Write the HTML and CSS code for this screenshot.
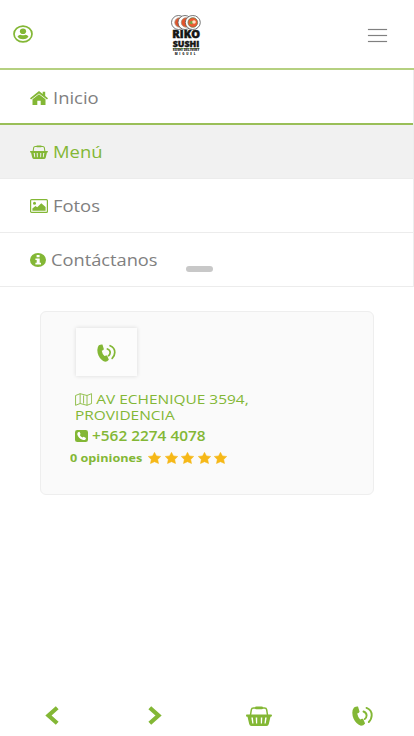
FILE: index.html
```html
<!DOCTYPE html>
<html lang="es">
<head>
<meta charset="utf-8">
<meta name="viewport" content="width=device-width, initial-scale=1">
<title>Riko Sushi</title>
<link rel="stylesheet" href="styles.css">
</head>
<body>
<svg class="defs" width="0" height="0">
  <symbol id="basket" viewBox="0 0 26 20">
    <path d="M4.500 9 5.300 3.800Q5.600 2 7.500 2H18.500Q20.400 2 20.700 3.800L21.500 9" fill="none" stroke="currentColor" stroke-width="1.500"/>
    <rect x="9" y=".6" width="8" height="2.600" rx="1.300" fill="currentColor"/>
    <path fill-rule="evenodd" fill="currentColor" d="M1 8.500H25Q26 8.500 26 9.500T25 10.700H24.500L22.800 18Q22.400 20 20.500 20H5.500Q3.600 20 3.200 18L1.500 10.700H1Q0 10.700 0 9.500T1 8.500ZM5.300 11.500 6.300 17.500H7.500L6.900 11.500ZM9.700 11.500 10 17.500H11.200V11.500ZM14.800 11.500V17.500H16L16.300 11.500ZM19.100 11.500 18.500 17.500H19.700L20.700 11.500Z"/>
  </symbol>
  <symbol id="phone" viewBox="0 0 21 20">
    <path fill="currentColor" d="M2 1.500Q4 .2 6 .5L7.600 5.800Q6.800 7.200 5.200 7.500Q5.800 11 8.200 13.400Q9.800 12.300 11.200 12.900L13.100 17.500Q11.500 19.700 9 19.700Q4.300 18.500 1.600 12.800Q-1.200 5.500 2 1.500Z"/>
    <path fill="none" stroke="currentColor" stroke-width="1.900" stroke-linecap="round" d="M11.500 5.500Q14.600 6.600 14.600 9.500Q14.500 12 12.800 13M14.500 1.900Q19.800 4 19.700 9.300Q19.600 13.400 16.800 16"/>
  </symbol>
  <symbol id="star" viewBox="0 0 24 24">
    <path fill="currentColor" stroke="currentColor" stroke-linejoin="round" d="M12 .7 15.600 7.800 23.500 8.900 17.900 14.900 19.400 23 12 19.400 4.600 23 6.100 14.900 .5 8.900 8.400 7.800Z"/>
  </symbol>
</svg>

<header class="topbar">
  <svg class="user" viewBox="0 0 20 18" preserveAspectRatio="none">
    <ellipse cx="10" cy="9" rx="9" ry="7.900" fill="none" stroke="currentColor" stroke-width="1.700"/>
    <ellipse cx="10" cy="6.300" rx="3.100" ry="2.800" fill="currentColor"/>
    <path fill="currentColor" d="M4.500 11.700Q5.500 9.800 7.600 9.700Q10 11 12.400 9.700Q14.500 9.800 15.500 11.700Q13.500 14.300 10 14.300T4.500 11.700Z"/>
  </svg>
  <div class="logo">
    <svg class="rolls" viewBox="0 0 30 15">
      <g stroke="#555" stroke-width=".8">
        <ellipse cx="7.500" cy="7.500" rx="7" ry="7" fill="#fff"/><circle cx="8.500" cy="7.500" r="4.700" fill="#e3532b" stroke="#a79078"/>
        <ellipse cx="14" cy="7.500" rx="7" ry="7" fill="#fff"/><circle cx="15" cy="7.500" r="4.700" fill="#e3532b" stroke="#a79078"/>
        <ellipse cx="21.800" cy="7.500" rx="7.500" ry="7" fill="#fff"/><circle cx="21.800" cy="7.500" r="4.800" fill="#ee5a30" stroke="#6b7a4a"/>
      </g>
      <path d="M18.500 8.500Q19 5 22 6L21.500 9.500Z" fill="#79a544"/><circle cx="23" cy="7" r="1.800" fill="#ffe3c4"/>
    </svg>
    <span class="riko">RIKO</span>
    <span class="sushi">SUSHI</span>
    <span class="tag">SUSHI DELIVERY</span>
    <span class="miguel">MIGUEL</span>
  </div>
  <div class="burger"><i></i><i></i><i></i></div>
</header>

<nav class="menu">
  <a class="item first">
    <svg class="ico" width="18" height="14" viewBox="0 0 18 14"><path fill="currentColor" d="M9 0 12.700 3V.8H15.200V5L18 7.300 17 8.600 9 2.500 1 8.600 0 7.300ZM9 3.300 15.500 8.300V14H10.700V9.800H7.300V14H2.500V8.300Z"/></svg>
    <span class="label">Inicio</span>
  </a>
  <a class="item active">
    <svg class="ico" width="18" height="14" viewBox="0 0 26 20" preserveAspectRatio="none"><use href="#basket" width="26" height="20"/></svg>
    <span class="label">Menú</span>
  </a>
  <a class="item">
    <svg class="ico" width="18" height="14" viewBox="0 0 18 14"><rect x=".6" y=".6" width="16.800" height="12.800" rx="1" fill="none" stroke="currentColor" stroke-width="1.200"/><circle cx="4.500" cy="4.200" r="1.500" fill="currentColor"/><path fill="currentColor" d="M2.400 11.700V9.500L5.500 7 7.200 8.300 11.300 4.300 15.600 8V11.700Z"/></svg>
    <span class="label">Fotos</span>
  </a>
  <a class="item info">
    <svg class="ico" width="16" height="14" viewBox="0 0 16 14"><ellipse cx="8" cy="7" rx="8" ry="7" fill="currentColor"/><path fill="#fff" d="M6.600 2H9.600V4.200H6.600ZM5.400 5.400H9.700V9.800H11V11.500H5.400V9.800H6.700V7H5.400Z"/></svg>
    <span class="label">Contáctanos</span>
  </a>
  <span class="handle"></span>
</nav>

<main class="card">
  <div class="call"><svg width="19" height="18" viewBox="0 0 21 20"><use href="#phone" width="21" height="20"/></svg></div>
  <p class="address">
    <svg class="map" width="15" height="13" viewBox="0 0 15 13" preserveAspectRatio="none"><path fill="none" stroke="currentColor" stroke-width=".8" d="M.5 2.500 4.500.7 10.500 2.500 14.500.7V10.500L10.500 12.300 4.500 10.500.5 12.300ZM4.500.7V10.500M10.500 2.500V12.300M7.500 2.500V10.500"/></svg>
    AV ECHENIQUE 3594,<br>PROVIDENCIA
  </p>
  <p class="phone">
    <svg width="13" height="12" viewBox="0 0 13 12"><rect width="13" height="12" rx="2.300" fill="currentColor"/><path fill="#fff" d="M3 2.300 4.500 1.800 5.600 4 4.800 4.900Q5.600 6.700 7.600 7.500L8.600 6.700 11 7.900 10.500 9.400Q9.500 10.500 7.500 9.800Q3.500 8.500 2.300 4.500Q2.200 3 3 2.300Z"/></svg>
    <span>+562 2274 4078</span>
  </p>
  <div class="reviews">
    <span class="count">0 opiniones</span>
    <span class="stars">
      <svg viewBox="0 0 24 24" preserveAspectRatio="none"><use href="#star" width="24" height="24"/></svg>
      <svg viewBox="0 0 24 24" preserveAspectRatio="none"><use href="#star" width="24" height="24"/></svg>
      <svg viewBox="0 0 24 24" preserveAspectRatio="none"><use href="#star" width="24" height="24"/></svg>
      <svg viewBox="0 0 24 24" preserveAspectRatio="none"><use href="#star" width="24" height="24"/></svg>
      <svg viewBox="0 0 24 24" preserveAspectRatio="none"><use href="#star" width="24" height="24"/></svg>
    </span>
  </div>
</main>

<footer class="bottombar">
  <svg width="14" height="19" viewBox="0 0 14 19"><path fill="none" stroke="currentColor" stroke-width="4.200" d="M12.200 1.800 3.500 9.500 12.200 17.200"/></svg>
  <svg class="next" width="14" height="19" viewBox="0 0 14 19"><path fill="none" stroke="currentColor" stroke-width="4.200" d="M1.800 1.800 10.500 9.500 1.800 17.200"/></svg>
  <svg class="cart" width="26" height="20"><use href="#basket" width="26" height="20"/></svg>
  <svg class="dial" width="21" height="20"><use href="#phone" width="21" height="20"/></svg>
</footer>
</body>
</html>
```
FILE: styles.css
```css
* { box-sizing: border-box; }

body {
  margin: 0;
  height: 736px;
  display: flex;
  flex-direction: column;
  overflow: hidden;
  background: #fff;
  color: #83b735;
  font-family: "Open Sans", sans-serif;
}

svg { display: block; flex: none; }
.defs { display: none; }

.topbar {
  height: 70px;
  flex: none;
  display: flex;
  align-items: flex-start;
  padding: 0 27px 0 13px;
  border-bottom: 2px solid #b5d080;
}
.user { width: 20px; height: 18px; margin-top: 25px; }

.logo {
  width: 30px;
  margin: 15px 0 0 138px;
  display: flex;
  flex-direction: column;
  align-items: center;
  color: #151515;
  font-weight: 800;
  white-space: nowrap;
}
.rolls { width: 30px; height: 15px; }
.riko { font-size: 10.5px; line-height: 9px; -webkit-text-stroke: .5px #151515; transform: scaleX(1.05); }
.sushi { font-size: 8px; line-height: 9px; -webkit-text-stroke: .4px #151515; transform: scaleX(1.1); }
.tag { font-size: 3px; line-height: 3px; border-top: 1px solid #9fce72; transform: scaleX(1.1); }
.miguel { font-size: 3px; line-height: 4px; letter-spacing: 1.8px; }

.burger {
  width: 19px;
  margin: 29px 0 0 auto;
  display: flex;
  flex-direction: column;
  gap: 5px;
}
.burger i { height: 1px; background: #808080; box-shadow: 0 0 1px #888; }

.menu {
  position: relative;
  flex: none;
  border-right: 1px solid #ededed;
}
.item {
  height: 54px;
  display: flex;
  align-items: center;
  gap: 5px;
  padding-left: 30px;
  border-bottom: 1px solid #ececec;
}
.item.first { height: 55px; padding-top: 2px; border-bottom: 2px solid #9abf58; }
.item.active { height: 54px; padding-top: 1px; background: #f1f1f1; }
.label {
  font-size: 16px;
  line-height: 22px;
  color: #808080;
  transform: scaleX(1.15);
  transform-origin: left;
}
.info .label { transform: scaleX(1.14); }
.active .label { color: #83b735; font-weight: 500; }
.handle {
  position: absolute;
  left: 186px;
  bottom: 15px;
  width: 27px;
  height: 6px;
  border-radius: 3px;
  background: #c8c8c8;
}

.card {
  width: 334px;
  height: 184px;
  flex: none;
  margin: 24px 0 0 40px;
  padding: 16px 0 0 35px;
  border: 1px solid #eee;
  border-radius: 6px;
  background: #fafafa;
}
.call {
  width: 61px;
  height: 48px;
  padding-top: 2px;
  display: flex;
  align-items: center;
  justify-content: center;
  background: #fcfcfc;
  box-shadow: 0 0 4px #d9d9d9;
}
.address {
  width: 200px;
  margin: 15px 0 0 -1px;
  font-size: 13.5px;
  line-height: 16px;
  transform: scaleX(1.145);
  transform-origin: left;
}
.map { display: inline-block; vertical-align: -2px; }
.phone {
  display: flex;
  align-items: center;
  gap: 4px;
  margin: 4px 0 0 -1px;
}
.phone span {
  font-size: 13.5px;
  line-height: 18px;
  font-weight: 600;
  transform: scaleX(1.14);
  transform-origin: left;
}
.reviews {
  display: flex;
  align-items: center;
  margin: 5px 0 0 -6px;
}
.count {
  width: 78px;
  font-size: 11px;
  line-height: 16px;
  font-weight: 700;
  white-space: nowrap;
  transform: scaleX(1.15);
  transform-origin: left;
}
.stars { display: flex; gap: 3.5px; color: #f6b817; }
.stars svg { width: 13px; height: 12px; }

.bottombar {
  display: flex;
  align-items: center;
  height: 41px;
  margin-top: auto;
  padding: 0 0 0 45px;
}
.next { margin-left: 89px; }
.cart { margin-left: 84px; }
.dial { margin-left: 80px; }
```
